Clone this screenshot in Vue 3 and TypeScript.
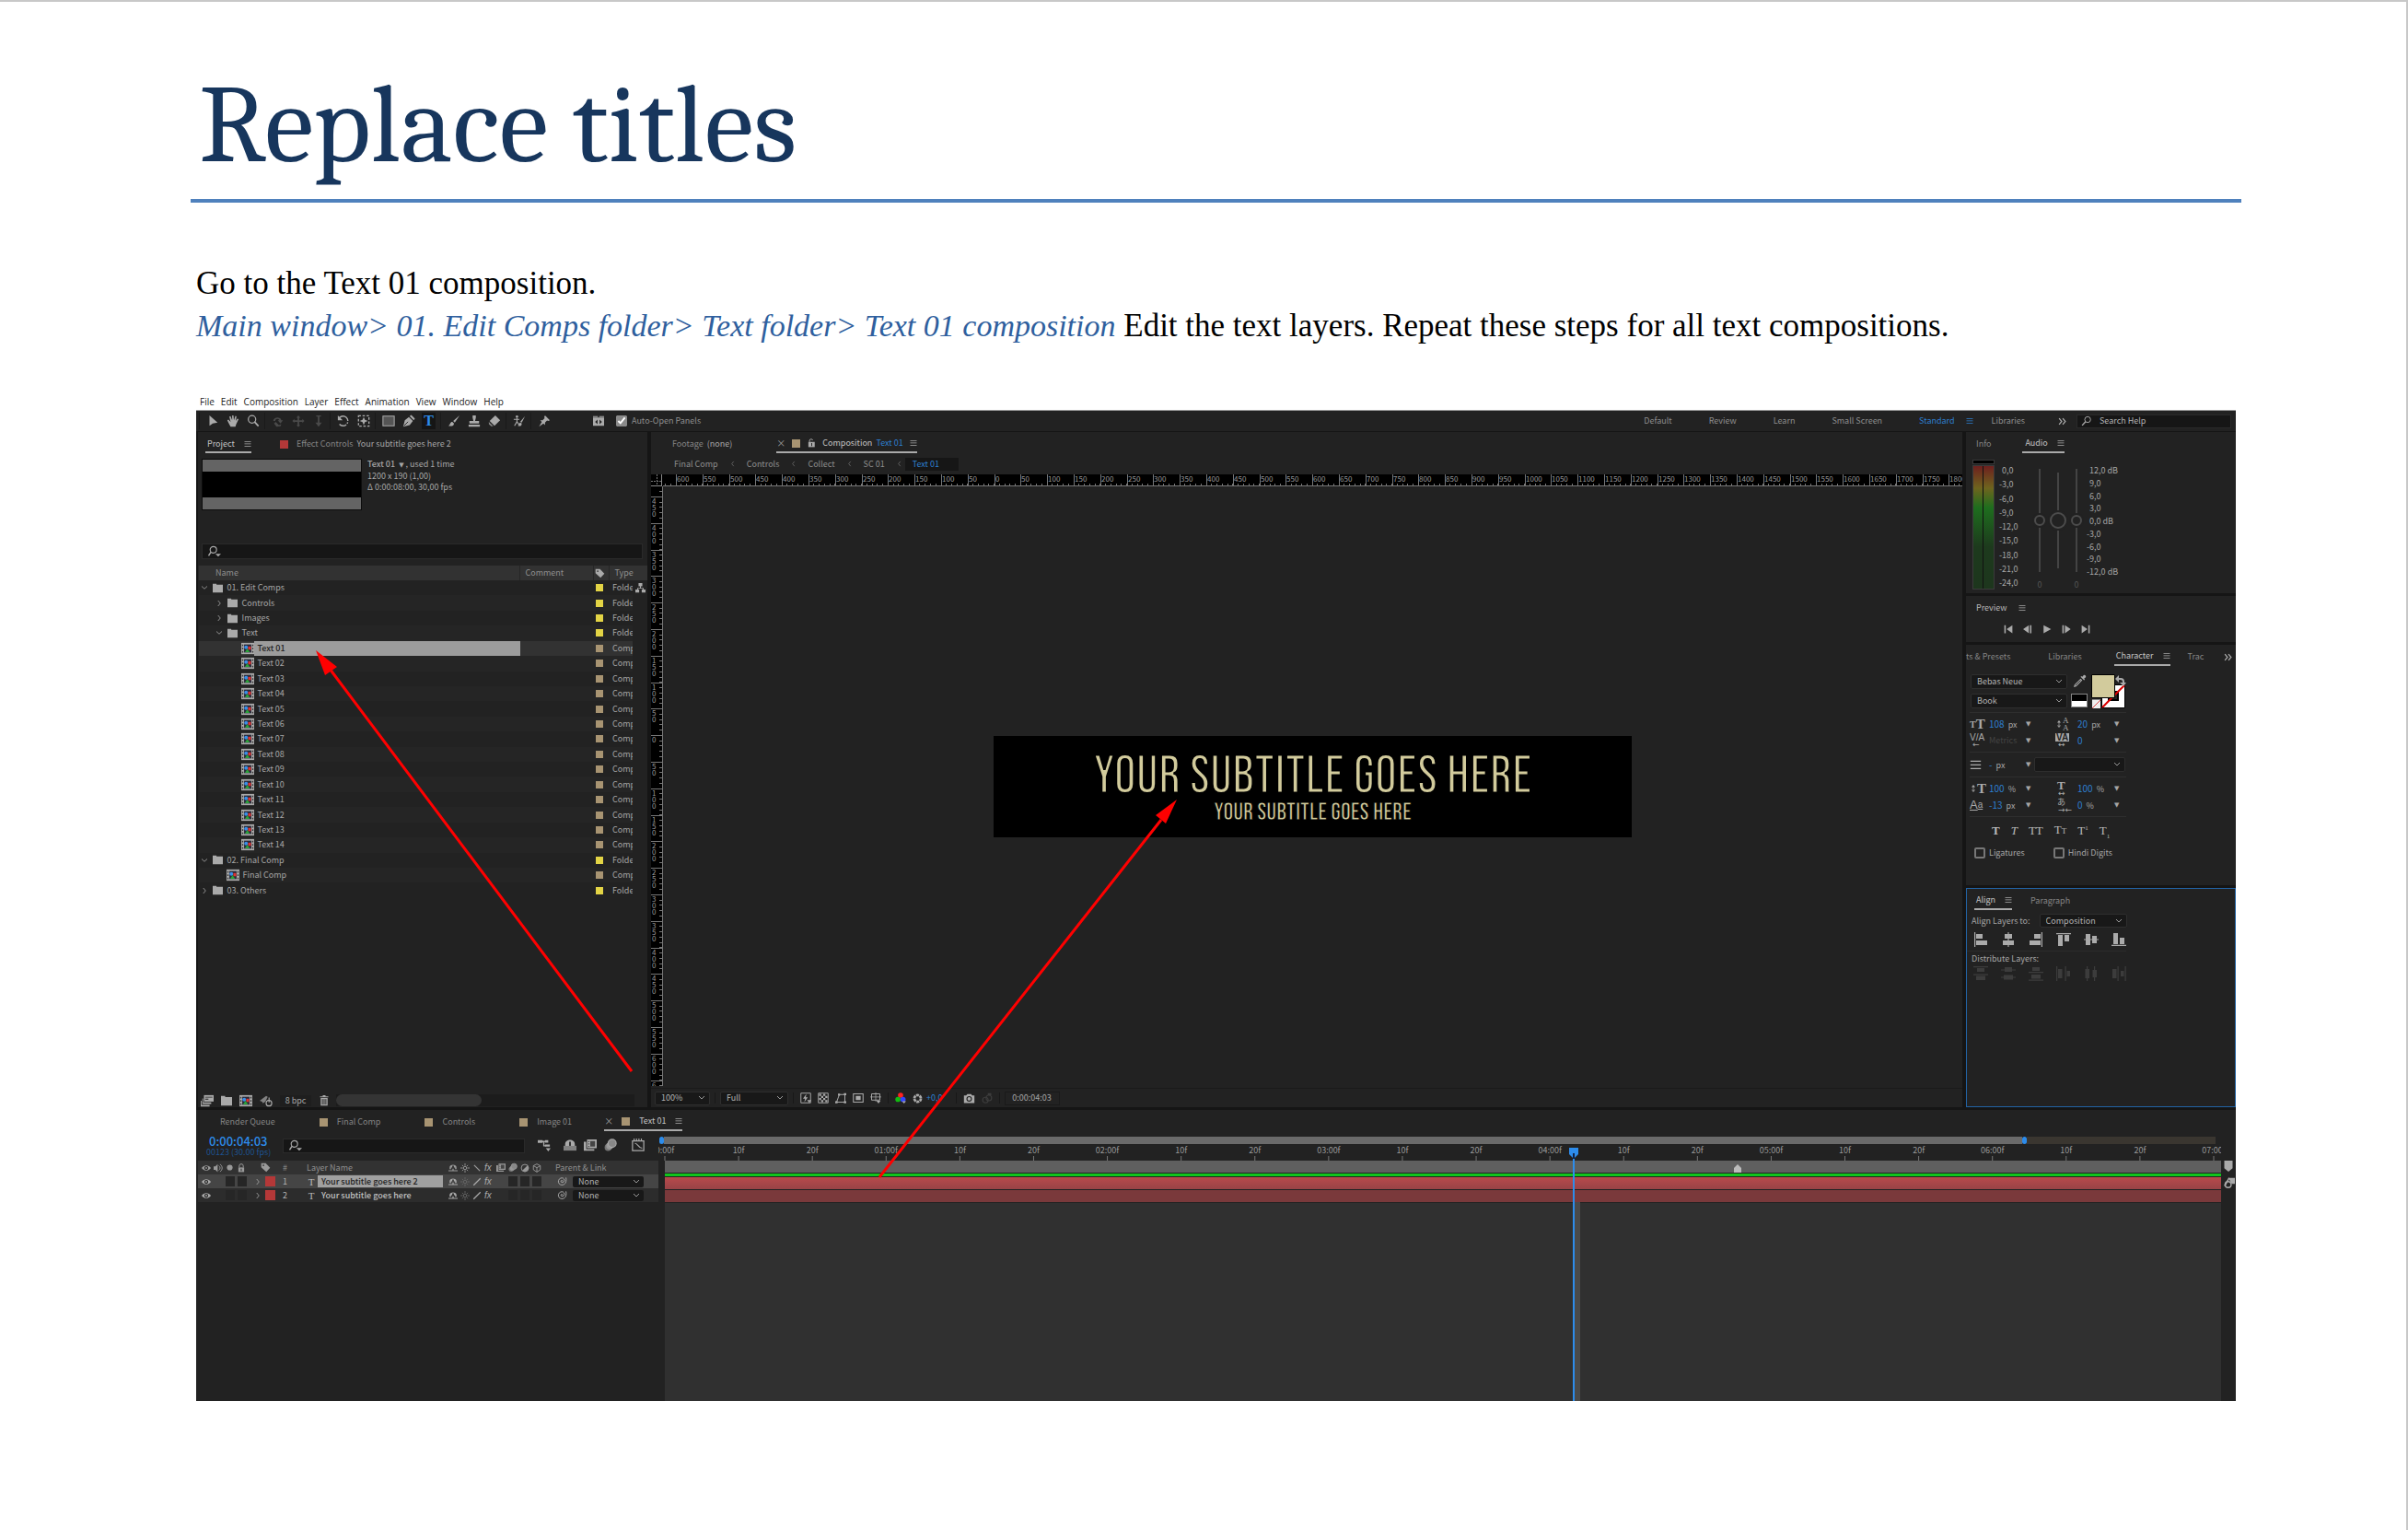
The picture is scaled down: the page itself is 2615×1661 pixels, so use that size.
<script setup lang="ts">
import { h, ref, type FunctionalComponent } from 'vue'

const glyphs: Record<string, string> = {
  arrow: '<path d="M4 1v13l4-3 6-1z"/>',
  hand: '<path d="M5 15 2 9.500 1 7l1.300-.6L5 9 3.500 2.500 5 2l2 5L7 1h1.600l.6 6L11 1.800l1.400.4L11.500 8l2-3 1.500.6-3 6.400-1 3z"/>',
  zoom: '<circle cx="6.500" cy="6" r="4.600" fill="none" stroke="currentColor" stroke-width="1.400"/><path d="m9.500 9 5 5.500" stroke="currentColor" stroke-width="2"/>',
  orbit: '<path d="M2 8c0-5 9-6 10-1l2 0-3 4-3.500-4h2C8 4 4 6 4.500 8zM5 9l4 4 3-1-1 2.500-5 .5-3-4z"/>',
  pan: '<path d="m8 1 2.500 3H9v3h4V5.500L15.500 8 13 10.500V9H9v4h1.500L8 15.500 5.500 13H7V9H3v1.500L.5 8 3 5.500V7h4V4H5.500z"/>',
  dolly: '<path d="M7 1h2v9h3l-4 5-4-5h3zM5 1h6v1.500H5z"/>',
  rotate: '<path d="M3 4a6 6 0 1 1 0 8" fill="none" stroke="currentColor" stroke-width="1.600" stroke-dasharray="14 1.500 2 1.500"/><path d="M1 1v6h6z"/>',
  anchor: '<path d="M1.500 1.500h13v13h-13z" fill="none" stroke="currentColor" stroke-width="1.500" stroke-dasharray="3 2"/><path d="m8 3 1.500 3.500L13 8 9.500 9.500 8 13 6.500 9.500 3 8l3.500-1.500z"/>',
  rect: '<path d="M1 2h14v12H1z" fill="#555" stroke="currentColor" stroke-width="1.200"/>',
  pen: '<path d="m1 15 2-8 5-4 5 5-4 5zM9 2l2-1.500L15.500 5 14 7z"/><path d="m2 14 5-5" stroke="#222"/>',
  brush: '<path d="M15 1 7 8l2 2zM6 9c-3 0-2 3-5 5 4 1 7 0 7-3z"/>',
  stamp: '<path d="M6 1h4v3L9 8h5v3H2V8h5L6 4zM1 12.500h14V15H1z"/>',
  eraser: '<path d="m9 1 6 6-7 7-6-6z"/><path d="m1 9 5.500 5.500H4L1 12z" fill="#888"/>',
  roto: '<circle cx="5" cy="2.500" r="1.500"/><path d="M1 6h7M5 4v5l-3 5M5 9l3 4" fill="none" stroke="currentColor" stroke-width="1.300"/><path d="m15 2-6 7 2 1zM9 10c-2 1-1 3-3 4 3 1 5 0 5-3z"/>',
  pin: '<path d="m9 1 6 6-2 1-1.500-.5L9 10v3L3 7h3l2.500-2.500L8 3zM5 9l2 2-5.500 4z"/>',
  gear: '<path d="M0 3h16v12H0zM0 1h7v1.200H0zM9 1h7v1.200H9z"/><path d="M6.500 6v6.500L3 9.200zM9.500 6v6.500l3.500-3.300z" fill="#222"/>',
  search: '<circle cx="9.500" cy="6" r="4.200" fill="none" stroke="currentColor" stroke-width="1.300"/><path d="m6.500 9-5 5.500" stroke="currentColor" stroke-width="1.800"/>',
  searchd: '<circle cx="6.500" cy="5.500" r="4" fill="none" stroke="currentColor" stroke-width="1.300"/><path d="m3.500 8.500-3 4.500" stroke="currentColor" stroke-width="1.700"/><path d="M9 10.500h7l-3.500 3.500z"/>',
  menu: '<path d="M1 2h14v1.600H1zM1 7h14v1.600H1zM1 12h14v1.600H1z"/>',
  chevr: '<path d="m5.500 2 5 6-5 6" fill="none" stroke="currentColor" stroke-width="1.600"/>',
  chevl: '<path d="m11 2-5 6 5 6" fill="none" stroke="currentColor" stroke-width="1.600"/>',
  chevd: '<path d="m2 5 6 5.500L14 5" fill="none" stroke="currentColor" stroke-width="1.600"/>',
  more: '<path d="m2 2 5 6-5 6M9 2l5 6-5 6" fill="none" stroke="currentColor" stroke-width="2.200"/>',
  folder: '<path d="M0 1h6v1.500h10V15H0z"/>',
  comp: '<path d="M0 1h16v14H0z" fill="#aaa"/><path d="M1 3h1.500v2H1zm0 4h1.500v2H1zm0 4h1.500v2H1zM13.500 3H15v2h-1.500zm0 4H15v2h-1.500zm0 4H15v2h-1.500z" fill="#333"/><path d="M3.500 3h9v10h-9z" fill="#2a2a3a"/><circle cx="6" cy="6.500" r="2.300" fill="#3a8ee8"/><path d="M8.500 5.500h3.500v4H8.500z" fill="#d33"/><path d="m7.500 8 3 4.500h-6z" fill="#2aa33a"/>',
  tag: '<path d="M1 1h7l7 7.500L9 15 1 7.500z"/><circle cx="4.500" cy="4.500" r="1.300" fill="#333"/>',
  flow: '<path d="M5 0h6v5H5zM0 10h6v5H0zM10 10h6v5h-6zM7.300 5h1.400v2.500H13V10h-1.400V8.800H4.400V10H3V7.500h4.300z"/>',
  interpret: '<path d="M4 1h12v8H4z"/><path d="M5.500 3h9v1h-9zm0 2.500h4v1h-4z" fill="#222"/><path d="M2 5h1v5h10v2H2zM0 8h1v5h10v2H0z"/>',
  plane: '<path d="m0 8 8-6 2 1-3 6-3 2-1-2z" opacity=".7"/><circle cx="11.500" cy="11" r="3.500" fill="none" stroke="currentColor" stroke-width="1.300"/><path d="M11 4h1.300v6H11z"/>',
  trash: '<path d="M6 0h4v1.500h4V3H2V1.500h4zM3 4h10v11H3z"/><path d="M5.500 5.500v8M8 5.500v8M10.500 5.500v8" stroke="#222" stroke-width="1.200"/>',
  lock: '<path d="M3 7h10v8H3z"/><path d="M4.500 7V4.500a3.500 3.500 0 0 1 7 0V7" fill="none" stroke="currentColor" stroke-width="1.600"/><path d="M7.300 9h1.400v4H7.300z" fill="#222"/>',
  unlock: '<path d="M3 6h11v9H3z"/><path d="M5 6V3.500c0-3 5-3 5.500-.5" fill="none" stroke="currentColor" stroke-width="1.600"/><path d="M8 8h1.500v5H8z" fill="#222"/>',
  fast: '<path d="M1 1h14v14H1z" fill="none" stroke="currentColor" stroke-width="1.300"/><path d="M9 2 4 9h3l-1 5 5-7H8z"/><path d="M10 11h6l-3 4z"/>',
  grid: '<path d="M1 1h14v14H1z" fill="none" stroke="currentColor" stroke-width="1.300"/><path d="M2 2h3v3H2zm6 0h3v3H8zM5 5h3v3H5zm6 0h3v3h-3zM2 8h3v3H2zm6 0h3v3H8zm-3 3h3v3H5zm6 0h3v3h-3z"/>',
  mask: '<path d="M2 14 6 3h8v11z" fill="none" stroke="currentColor" stroke-width="1.300"/><path d="M0 12.500h3.500v3H0zM12.500 12.500H16v3h-3.500zM12.500 1H16v3h-3.500zM4 1.500h3v3H4z"/>',
  roi: '<path d="M1 2h14v12H1z" fill="none" stroke="currentColor" stroke-width="1.400"/><path d="M4.500 5h7v6h-7z"/>',
  guides: '<path d="M2 2h12v9H2z" fill="none" stroke="currentColor" stroke-width="1.300"/><path d="M8 0v13M0 6.500h16" stroke="currentColor"/><path d="M9 12h6l-3 4z"/>',
  rgb: '<circle cx="8" cy="4" r="3.800" fill="#f22"/><circle cx="4.200" cy="10" r="3.800" fill="#1b1"/><circle cx="11.500" cy="10" r="3.800" fill="#34f"/><path d="M10 12.500h6L13 16z"/>',
  shutter: '<circle cx="8" cy="8" r="5.200" fill="none" stroke="currentColor" stroke-width="4" stroke-dasharray="4.400 1"/>',
  camera: '<path d="M1 4h3l1.500-2h5L12 4h3v10H1z"/><circle cx="8" cy="8.500" r="3" fill="none" stroke="#222" stroke-width="1.400"/>',
  snap: '<circle cx="5.500" cy="11" r="4" fill="none" stroke="currentColor" stroke-width="1.600"/><circle cx="10.500" cy="8" r="4" fill="none" stroke="currentColor" stroke-width="1.600"/><path d="M9 1h5v3H9z"/>',
  first: '<path d="M1 1h2.500v14H1zM15 1v14L5 8z"/>',
  prev: '<path d="M10 1v14L0 8zM12 1h2.500v14H12z"/>',
  play: '<path d="M2 1v14l13-7z"/>',
  next: '<path d="M1 1h2.500v14H1zM5.500 1v14l10-7z"/>',
  last: '<path d="M1 1v14l10-7zM12.500 1H15v14h-2.500z"/>',
  drop: '<path d="m1 15 1-3 7-7 2 2-7 7zM9 3l1-1 1 1 1.500-2c1-1 3.500 1 2.500 2.500L13 5l1 1-1 1z"/><path d="m3 13 6-6" stroke="#222"/>',
  updown: '<path d="M7.300 3h1.400v10H7.300zM8 0l4 5H4zM8 16l4-5H4z"/>',
  eye: '<path d="M0 8c4-6 12-6 16 0-4 6-12 6-16 0z"/><circle cx="8" cy="8" r="3.400" fill="#222"/><circle cx="8" cy="8" r="1.500"/>',
  speaker: '<path d="M0 5h3l4-4v14l-4-4H0z"/><path d="M9 4c3 2 3 6 0 8M11 1.500c5 3 5 10 0 13" fill="none" stroke="currentColor" stroke-width="1.500"/>',
  dot: '<circle cx="8" cy="8" r="5.500"/>',
  shy: '<path d="M2 10V7c0-6 12-6 12 0v3h-2.500V7H9.500V4h-3v3h-2v3zM0 12h7V9h2v3h7v1.500H0z"/>',
  sun: '<circle cx="8" cy="8" r="2.800" fill="none" stroke="currentColor" stroke-width="1.500"/><path d="M8 0v4M8 12v4M0 8h4M12 8h4M3 3l2 2M11 11l2 2M3 13l2-2M11 5l2-2" stroke="currentColor" stroke-width="1.400"/>',
  back: '<path d="m3 3 10 10" stroke="currentColor" stroke-width="2"/>',
  slash: '<path d="M2 14 14 2" stroke="currentColor" stroke-width="2"/>',
  film: '<path d="M4 1h12v11H4zM0 4h3v9h10v2H0z"/><path d="M5.500 3h1.500v1.500H5.500zm0 3h1.500v1.500H5.500zm0 3h1.500v1.500H5.500zM8 3h6v7H8z" fill="#444"/>',
  blur: '<circle cx="5" cy="11" r="4.300" fill="#777"/><circle cx="7" cy="9" r="4.300" fill="#999"/><circle cx="10" cy="6" r="5" fill="#888" stroke="currentColor" stroke-width="1.300"/>',
  adjust: '<circle cx="8" cy="8" r="6.300" fill="none" stroke="currentColor" stroke-width="1.500"/><path d="M12.500 3.500A6.300 6.300 0 0 1 3.500 12.500z"/>',
  cube: '<path d="m8 1 6 3v7l-6 4-6-4V4zM2 4l6 3.500L14 4M8 7.500V15" fill="none" stroke="currentColor" stroke-width="1.500"/>',
  mini: '<path d="M0 2h6v3.500H0zM9 2h4v3H9zM9 7.500h6v2.500H9z"/><path d="M5 3.700h4M7.500 4v5H10" fill="none" stroke="currentColor" stroke-width="1.500"/><path d="M10 12h6l-3 4z"/>',
  shybig: '<path d="M0 9h16v6H0z" opacity=".7"/><path d="M2 9V7c0-7 12-7 12 0v2H9V4H7v5z"/>',
  graph: '<path d="M1 3h14v12H1z" fill="none" stroke="currentColor" stroke-width="1.400"/><path d="M4 6c4 0 4 6 9 6M3 0v3M6 0v3M9 0v3M12 0v3" fill="none" stroke="currentColor" stroke-width="1.300"/>',
  spiral: '<path d="M9 8a1.500 1.500 0 1 0-2 1.500c2 .8 4.500-.5 4.500-3C11.500 3 8 1.800 5.500 3 2 4.500 1 8.500 3 11.500c2 2.500 6 3 8.500 1C14 10.500 15 7 14 2" fill="none" stroke="currentColor" stroke-width="1.400"/>',
  marker: '<path d="M2 0h12v11l-6 5-6-5z"/>',
  track: '<path d="M7 2h9v8h-4zM1 13 8 1v4l-4 7z"/><circle cx="7" cy="11" r="4" fill="none" stroke="currentColor" stroke-width="1.800"/>',
  a1: '<path d="M1 0h1.200v16H1zM3 2h7v5H3zM3 9h12v5H3z"/>',
  a2: '<path d="M7.400 0h1.200v16H7.400zM4 2h8v5H4zM2 9h12v5H2z"/>',
  a3: '<path d="M13.800 0H15v16h-1.200zM6 2h7v5H6zM1 9h12v5H1z"/>',
  a4: '<path d="M0 1h16v1.200H0zM2 3h5v12H2zM9 3h5v7H9z"/>',
  a5: '<path d="M0 7.400h16v1.200H0zM2 2h5v12H2zM9 4h5v8H9z"/>',
  a6: '<path d="M0 13.800h16V15H0zM2 1h5v12H2zM9 6h5v7H9z"/>',
  d1: '<path d="M0 0h16v1.200H0zM4 2h8v4H4zM0 8.500h16v1.200H0zM3 10.500h10V15H3z"/>',
  d2: '<path d="M0 3.400h16v1.200H0zM4 1h8v5H4zM0 11.400h16v1.200H0zM3 9.500h10v5H3z"/>',
  d3: '<path d="M4 1h8v4H4zM0 6h16v1.200H0zM3 9h10v4.500H3zM0 14.500h16v1.200H0z"/>',
  d4: '<path d="M0 0h1.200v16H0zM2 3h4.500v10H2zM9.500 0h1.200v16H9.500zM11.500 5H15v6h-3.500z"/>',
  d5: '<path d="M3 0h1.200v16H3zM1.500 3H6v10H1.500zM11 0h1.200v16H11zM9.500 4H14v8H9.500z"/>',
  d6: '<path d="M1 3h4.500v10H1zM6.500 0h1.200v16H6.500zM10 5h3.500v6H10zM14.500 0h1.200v16h-1.200z"/>',
}

const Icon: FunctionalComponent<{ n: string; s?: number }> = (p) =>
  h('svg', { class: 'icon', viewBox: '0 0 16 16', width: p.s ?? 12, height: p.s ?? 12, fill: 'currentColor', 'aria-hidden': 'true', innerHTML: glyphs[p.n] })
Icon.props = ['n', 's']

const menus = ['File', 'Edit', 'Composition', 'Layer', 'Effect', 'Animation', 'View', 'Window', 'Help']
const toolGroups = [
  ['arrow', 'hand', 'zoom'],
  ['orbit', 'pan', 'dolly'],
  ['rotate', 'anchor'],
  ['rect', 'pen', 'type'],
  ['brush', 'stamp', 'eraser'],
  ['roto'],
  ['pin'],
]

interface Item { name: string; level: number; kind: 'folder' | 'comp'; open?: boolean }
const items: Item[] = [
  { name: '01. Edit Comps', level: 0, kind: 'folder', open: true },
  { name: 'Controls', level: 1, kind: 'folder' },
  { name: 'Images', level: 1, kind: 'folder' },
  { name: 'Text', level: 1, kind: 'folder', open: true },
  ...Array.from({ length: 14 }, (_, i): Item => ({ name: 'Text ' + String(i + 1).padStart(2, '0'), level: 2, kind: 'comp' })),
  { name: '02. Final Comp', level: 0, kind: 'folder', open: true },
  { name: 'Final Comp', level: 1, kind: 'comp' },
  { name: '03. Others', level: 0, kind: 'folder' },
]
const selected = ref('Text 01')

/* Rulers: 100 composition units span 57.6 px, zero sits on the composition's corner */
const unit = 0.576
const hMajor = Array.from({ length: 49 }, (_, i) => ({ x: Math.round(14 + i * 50 * unit), t: Math.abs(i * 50 - 600) }))
const hMinor = Array.from({ length: 245 }, (_, i) => Math.round(2 + i * 10 * unit))
const vMajor = Array.from({ length: 23 }, (_, i) => ({ y: Math.round(11 + i * 50 * unit), t: String(Math.abs(i * 50 - 450)) }))
const vMinor = Array.from({ length: 113 }, (_, i) => Math.round(5 + i * 10 * unit))

const meter = ['0,0', '-3,0', '-6,0', '-9,0', '-12,0', '-15,0', '-18,0', '-21,0', '-24,0']
const gain = ['12,0 dB', '9,0', '6,0', '3,0', '0,0 dB', '-3,0', '-6,0', '-9,0', '-12,0 dB']

const seconds = Array.from({ length: 22 }, (_, i) => ({
  pos: (i / 21) * 100,
  t: i === 0 ? '0:00f' : i % 3 === 0 ? `0${i / 3}:00f` : `${(i % 3) * 10}f`,
}))

const layers = [
  { n: 1, name: 'Your subtitle goes here 2' },
  { n: 2, name: 'Your subtitle goes here' },
]
</script>

<template>
  <main class="page">
    <h1>Replace titles</h1>
    <p class="intro">
      Go to the Text 01 composition.<br />
      <em>Main window&gt; 01. Edit Comps folder&gt; Text folder&gt; Text 01 composition</em> Edit the text layers. Repeat these steps for all text compositions.
    </p>

    <section class="shot">
      <nav class="menubar"><button v-for="m in menus" :key="m">{{ m }}</button></nav>

      <div class="window">
        <div class="toolbar">
          <div v-for="(g, i) in toolGroups" :key="i" class="tools" :class="{ dim: i === 1 }">
            <button v-for="t in g" :key="t" class="tool" :class="{ on: t === 'type' }" :aria-label="t">
              <span v-if="t === 'type'" class="tglyph">T</span><Icon v-else :n="t" :s="14" />
            </button>
          </div>
          <button class="gearbtn" aria-label="Panels"><Icon n="gear" /></button>
          <label class="auto"><input type="checkbox" checked />Auto-Open Panels</label>
          <nav class="spaces">
            <button>Default</button><button>Review</button><button>Learn</button><button>Small Screen</button>
            <button class="std">Standard <Icon n="menu" :s="8" /></button><button>Libraries</button>
          </nav>
          <button class="morebtn" aria-label="More"><Icon n="more" :s="9" /></button>
          <label class="help"><Icon n="search" /><input type="text" placeholder="Search Help" aria-label="Search Help" /></label>
        </div>

        <div class="work">
          <section class="panel project">
            <div class="tabs">
              <button class="tab active">Project<Icon n="menu" :s="8" class="tm" /></button>
              <button class="tab fx"><i class="sw red"></i><span class="muted">Effect Controls</span>&nbsp; Your subtitle goes here 2</button>
            </div>
            <div class="info">
              <div class="thumb"></div>
              <div><b>Text 01</b> &nbsp;<span class="tri">▼</span> , used 1 time<br />1200 x 190 (1,00)<br />Δ 0:00:08:00, 30,00 fps</div>
            </div>
            <label class="find"><Icon n="searchd" :s="14" /><input type="text" aria-label="Search project" /></label>
            <table class="files">
              <colgroup><col /><col class="c-com" /><col class="c-tag" /><col class="c-type" /><col class="c-flow" /></colgroup>
              <thead><tr><th class="h-name">Name</th><th>Comment</th><th><Icon n="tag" :s="11" /></th><th colspan="2">Type</th></tr></thead>
              <tbody>
                <tr v-for="it in items" :key="it.name" :class="{ sel: it.name === selected }" @click="selected = it.name">
                  <td>
                    <div class="fname" :class="'l' + it.level">
                      <span class="ch"><Icon v-if="it.kind === 'folder'" :n="it.open ? 'chevd' : 'chevr'" :s="8" /></span>
                      <Icon :n="it.kind" :s="14" :class="it.kind" /><span class="nm">{{ it.name }}</span>
                    </div>
                  </td>
                  <td></td>
                  <td><i class="sw" :class="it.kind === 'folder' ? 'yellow' : 'tan'"></i></td>
                  <td><div class="clip">{{ it.kind === 'folder' ? 'Folder' : 'Comp' }}</div></td>
                  <td class="fl"><Icon v-if="it.name === '01. Edit Comps'" n="flow" :s="11" /></td>
                </tr>
              </tbody>
            </table>
            <div class="pfoot">
              <button aria-label="Interpret"><Icon n="interpret" :s="14" /></button>
              <button aria-label="New folder"><Icon n="folder" /></button>
              <button aria-label="New composition"><Icon n="comp" :s="14" /></button>
              <button class="plane" aria-label="Settings"><Icon n="plane" :s="14" /></button>
              <button class="bpc">8 bpc</button>
              <button class="bin" aria-label="Delete"><Icon n="trash" /></button>
              <div class="scroll"><i></i></div>
            </div>
          </section>

          <section class="panel viewer">
            <div class="tabs">
              <button class="tab foot"><span class="muted">Footage</span>&nbsp; (none)</button>
              <button class="tab active comptab"><span class="x">×</span><i class="sw tan"></i><Icon n="unlock" :s="10" /><span>Composition &nbsp;<span class="blue">Text 01</span></span><Icon n="menu" :s="8" /></button>
            </div>
            <nav class="crumbs">
              <a href="#">Final Comp</a><Icon n="chevl" :s="7" /><a href="#">Controls</a><Icon n="chevl" :s="7" /><a href="#">Collect</a><Icon n="chevl" :s="7" /><a href="#">SC 01</a><Icon n="chevl" :s="7" class="lastch" /><a href="#" class="cur">Text 01</a>
            </nav>
            <div class="canvas">
              <svg class="corner"><path d="M0 7.500H12M6.500 0V12" stroke="#777" stroke-dasharray="2 1" /><path d="M11.500 0V13M0 12.500H12" stroke="#888" /></svg>
              <svg class="hruler">
                <line v-for="x in hMinor" :key="x" :x1="x" :x2="x" y1="10" y2="12" class="tk" />
                <g v-for="m in hMajor" :key="m.x"><line :x1="m.x" :x2="m.x" y1="0" y2="12" class="tk" /><text :x="m.x + 1" y="8">{{ m.t }}</text></g>
              </svg>
              <svg class="vruler">
                <line v-for="y in vMinor" :key="y" :y1="y" :y2="y" x1="9" x2="12" class="tk" />
                <g v-for="m in vMajor" :key="m.y"><line :y1="m.y" :y2="m.y" x1="0" x2="12" class="tk" /><text v-for="(d, j) in m.t" :key="j" x="1" :y="m.y + 8 + j * 7">{{ d }}</text></g>
              </svg>
              <div class="stage">
                <div class="frame"><div class="big">YOUR SUBTITLE GOES HERE</div><div class="small">YOUR SUBTITLE GOES HERE</div></div>
              </div>
            </div>
            <div class="vfoot">
              <select class="w60" aria-label="Zoom"><option>100%</option></select><i class="bar"></i>
              <select class="w74" aria-label="Resolution"><option>Full</option></select><i class="bar"></i>
              <div class="vicons"><button v-for="n in ['fast', 'grid', 'mask', 'roi', 'guides']" :key="n" :aria-label="n"><Icon :n="n" /></button></div><i class="bar"></i>
              <div class="vicons"><button aria-label="Channels"><Icon n="rgb" /></button><button aria-label="Exposure"><Icon n="shutter" :s="11" /></button></div>
              <span class="exp">+0,0</span><i class="bar"></i>
              <div class="vicons"><button aria-label="Snapshot"><Icon n="camera" :s="13" /></button><button class="off" aria-label="Show snapshot"><Icon n="snap" /></button></div><i class="bar"></i>
              <button class="tc">0:00:04:03</button>
            </div>
          </section>

          <aside class="side">
            <section class="panel audio">
              <div class="tabs"><button class="tab muted">Info</button><button class="tab active">Audio<Icon n="menu" :s="8" class="tm" /></button></div>
              <div class="mix">
                <div class="vu"><i class="peak"></i><i class="lvl"></i></div>
                <ol class="scale db"><li v-for="v in meter" :key="v">{{ v }}</li></ol>
                <div class="faders">
                  <label><input type="range" aria-label="Left" /><span>0</span></label>
                  <label class="mid"><input type="range" aria-label="Both" /></label>
                  <label><input type="range" aria-label="Right" /><span>0</span></label>
                </div>
                <ol class="scale gain"><li v-for="v in gain" :key="v" :class="{ neg: v[0] === '-' }">{{ v }}</li></ol>
              </div>
            </section>
            <section class="panel preview">
              <h2>Preview <Icon n="menu" :s="8" /></h2>
              <div class="transport"><button v-for="n in ['first', 'prev', 'play', 'next', 'last']" :key="n" :aria-label="n"><Icon :n="n" :s="10" /></button></div>
            </section>
            <section class="panel char">
              <div class="tabs ctabs">
                <button class="tab muted">ts &amp; Presets</button><button class="tab muted">Libraries</button>
                <button class="tab active">Character<Icon n="menu" :s="8" class="tm" /></button><button class="tab muted">Trac</button>
                <button class="morebtn" aria-label="More"><Icon n="more" :s="9" /></button>
              </div>
              <div class="fonts">
                <div class="fsel"><select aria-label="Font"><option>Bebas Neue</option></select><select aria-label="Style"><option>Book</option></select></div>
                <div class="pick"><Icon n="drop" :s="15" /><i class="bw"></i></div>
                <svg class="colors" width="38" height="38">
                  <path d="M11.500 11.500h25v25h-25z" fill="#fff" stroke="#000" /><path d="M19 19h10v9H19z" fill="#222" stroke="#000" stroke-width="2" />
                  <path d="m12 36 24-24" stroke="#d00" stroke-width="2" /><path d="M.5.5h25v25H.5z" fill="#d2cb9c" stroke="#000" />
                  <path d="M1 27.500h9V37H1z" fill="#eee" /><path d="m1 37 9-9" stroke="#d44" />
                  <path d="M29 5h3q3 0 3 3v3" fill="none" stroke="#aaa" stroke-width="2" /><path d="M30 1v8l-4-4zM31 9h7l-3 4z" fill="#aaa" />
                </svg>
              </div>
              <div class="grp">
                <div class="cell"><span class="gl"><small>T</small>T</span><span class="v"><b>108</b> px</span><i class="tri">▼</i></div>
                <div class="cell"><span class="gl stack"><Icon n="updown" :s="8" /><span>A<br />A</span></span><span class="v"><b>20</b> px</span><i class="tri">▼</i></div>
                <div class="cell"><span class="gl sans">V/A<u>←</u></span><span class="v dimv">Metrics</span><i class="tri">▼</i></div>
                <div class="cell"><span class="gl sans"><mark>VA</mark><u>↔</u></span><span class="v"><b>0</b></span><i class="tri">▼</i></div>
              </div>
              <div class="grp one">
                <div class="cell"><span class="gl"><Icon n="menu" :s="13" /></span><span class="v"><b>-</b> px</span><i class="tri">▼</i></div>
                <select aria-label="Stroke style"><option></option></select>
              </div>
              <div class="grp">
                <div class="cell"><span class="gl mid"><Icon n="updown" :s="8" />T</span><span class="v"><b>100</b> %</span><i class="tri">▼</i></div>
                <div class="cell"><span class="gl sans"><span class="tw">T</span><u>↔</u></span><span class="v"><b>100</b> %</span><i class="tri">▼</i></div>
                <div class="cell"><span class="gl sans ul">A<small>a</small></span><span class="v"><b>-13</b> px</span><i class="tri">▼</i></div>
                <div class="cell"><span class="gl sans"><span class="jp">あ</span><u>→←</u></span><span class="v"><b>0</b> %</span><i class="tri">▼</i></div>
              </div>
              <div class="faux">
                <button><b>T</b></button><button><em>T</em></button><button>TT</button><button>T<small>T</small></button><button>T<sup>1</sup></button><button>T<sub>1</sub></button>
              </div>
              <div class="opts"><label><input type="checkbox" />Ligatures</label><label><input type="checkbox" />Hindi Digits</label></div>
            </section>
            <section class="panel align">
              <div class="tabs"><button class="tab active">Align<Icon n="menu" :s="8" class="tm" /></button><button class="tab muted">Paragraph</button></div>
              <label class="alto">Align Layers to: <select><option>Composition</option></select></label>
              <div class="aicons"><button v-for="i in 6" :key="i" :aria-label="'Align ' + i"><Icon :n="'a' + i" :s="16" /></button></div>
              <div class="dl">Distribute Layers:</div>
              <div class="aicons off"><button v-for="i in 6" :key="i" :aria-label="'Distribute ' + i"><Icon :n="'d' + i" :s="16" /></button></div>
            </section>
          </aside>
        </div>

        <section class="panel timeline">
          <div class="tabs ttabs">
            <button class="tab muted rq">Render Queue</button>
            <button class="tab muted"><i class="sw tan"></i>Final Comp</button>
            <button class="tab muted"><i class="sw tan"></i>Controls</button>
            <button class="tab muted"><i class="sw tan"></i>Image 01</button>
            <button class="tab active"><span class="x">×</span><i class="sw tan"></i>Text 01<Icon n="menu" :s="8" class="tm" /></button>
          </div>
          <div class="tl">
            <div class="tleft">
              <div class="thead">
                <div class="time"><b>0:00:04:03</b><span>00123 (30.00 fps)</span></div>
                <label class="find"><Icon n="searchd" :s="14" /><input type="text" aria-label="Search layers" /></label>
                <div class="ticons"><Icon n="mini" :s="14" /><Icon n="shybig" :s="14" /><Icon n="film" :s="14" /><Icon n="blur" :s="14" /><Icon n="graph" :s="14" /></div>
              </div>
              <table class="layers">
                <colgroup><col class="k1" /><col class="k2" /><col class="k3" /><col class="k4" /><col class="k5" /><col /></colgroup>
                <thead>
                  <tr>
                    <th><div class="av"><Icon n="eye" :s="10" /><Icon n="speaker" :s="10" /><Icon n="dot" :s="9" /><Icon n="lock" :s="10" /></div></th>
                    <th><div class="tg"><Icon n="tag" :s="11" /></div></th><th>#</th><th>Layer Name</th>
                    <th><div class="sws"><Icon n="shy" :s="10" /><Icon n="sun" :s="10" /><Icon n="back" :s="10" /><i class="fxi">fx</i><Icon n="film" :s="11" /><Icon n="blur" :s="11" /><Icon n="adjust" :s="10" /><Icon n="cube" :s="10" /></div></th>
                    <th>Parent &amp; Link</th>
                  </tr>
                </thead>
                <tbody>
                  <tr v-for="l in layers" :key="l.n" :class="{ lsel: l.n === 1 }">
                    <td><div class="av"><Icon n="eye" :s="10" /><s></s><s class="bx"></s><s class="bx"></s></div></td>
                    <td><div class="tg"><Icon n="chevr" :s="8" /><i class="sw red"></i></div></td>
                    <td class="num">{{ l.n }}</td>
                    <td><div class="ln"><span class="ty">T</span><span class="lname">{{ l.name }}</span></div></td>
                    <td><div class="sws"><Icon n="shy" :s="10" /><Icon n="sun" :s="10" class="faint" /><Icon n="slash" :s="10" /><i class="fxi">fx</i><s></s><s class="bx"></s><s class="bx"></s><s class="bx"></s></div></td>
                    <td><div class="par"><Icon n="spiral" :s="11" /><select aria-label="Parent"><option>None</option></select></div></td>
                  </tr>
                </tbody>
              </table>
            </div>
            <div class="tracks">
              <div class="navi"><i class="cap"></i><i class="range"></i><i class="cap"></i><i class="rest"></i></div>
              <svg class="truler">
                <g v-for="s in seconds" :key="s.pos"><line :x1="s.pos + '%'" :x2="s.pos + '%'" y1="14" y2="19" stroke="#777" /><text :x="s.pos + '%'" y="11" text-anchor="middle">{{ s.t }}</text></g>
              </svg>
              <div class="area"></div><div class="green"></div>
              <div class="clipbar c1"></div><div class="clipbar c2"></div>
              <div class="void"></div>
              <div class="playhead"><svg width="14" height="12"><path d="M2 0h10v7l-5 5-5-5z" fill="#2d8ceb" /><path d="M7 6v6" stroke="#124" stroke-width="2" /></svg></div>
              <svg class="work-mark" width="10" height="10"><path d="M1 9V4l4-4 4 4v5z" fill="#bbb" /></svg>
            </div>
            <div class="tright"><Icon n="marker" :s="12" /><Icon n="track" :s="13" /></div>
          </div>
        </section>

        <svg class="arrows" aria-hidden="true">
          <path d="M473 717 145 280M742 832l306-388" stroke="#f00" stroke-width="3" />
          <path d="m130 260 23 18-13 9zM1065 422l-23 17 11 9z" fill="#f00" />
        </svg>
      </div>
    </section>
  </main>
</template>

<style>
body { margin: 0; background: #fff; }
</style>

<style scoped>
* { box-sizing: border-box; }
.page { min-height: 100vh; padding: 0 179px 0 207px; border-top: 2px solid #c8c8c8; border-right: 2px solid #c8c8c8; background: #fff; }
h1 { margin: 0; padding: 66px 0 12px 9px; border-bottom: 4px solid #4f81bd; font: 400 120px/136px Cambria, Caladea, "Liberation Serif", serif; color: #17365d; }
.intro { margin: 65px 0 0 6px; font: 35px/46px "Liberation Serif", serif; color: #000; }
.intro em { font-size: 34px; color: #2f5f9e; }
.shot { margin: 50px 0 0 6px; font: 9px/12px "Noto Sans CJK SC", "Noto Sans", sans-serif; color: #a6a6a6; }
button { padding: 0; border: 0; background: none; font: inherit; color: inherit; white-space: nowrap; }
input[type="text"] { min-width: 0; flex: 1; padding: 0; border: 0; outline: 0; background: none; font: inherit; color: #b4b4b4; }
input::placeholder { color: #b4b4b4; }
select { appearance: none; font: inherit; color: #b4b4b4; border: 1px solid #2e2e2e; border-radius: 2px; padding: 0 6px; outline: 0; background: #181818 url('data:image/svg+xml,<svg xmlns="http://www.w3.org/2000/svg" width="8" height="6"><path d="M1 1l3 3 3-3" fill="none" stroke="%23999"/></svg>') no-repeat right 4px center; }
i { font-style: normal; }
.icon { display: block; flex: none; color: #aaa; }
.blue { color: #2d7fd0; }
.muted { color: #858585; }

.menubar { display: flex; gap: 7px; height: 18px; padding: 0 4px; align-items: center; font: 10px/14px "Open Sans", sans-serif; color: #222; }
.window { position: relative; display: flex; flex-direction: column; background: #151515; border-top: 1px solid #999; margin-right: 6px; }

.toolbar { display: flex; align-items: center; height: 22px; padding-left: 3px; margin-bottom: 1px; background: #222; }
.tools { display: flex; gap: 7px; padding: 0 5px 0 6px; border-left: 1px solid #1a1a1a; }
.tools.dim .icon { color: #4a4a4a; }
.tool { display: flex; width: 15px; height: 18px; align-items: center; justify-content: center; }
.tool.on { background: #151515; }
.tglyph { font: bold 16px/16px "Liberation Serif", serif; color: #2d8ceb; }
.gearbtn { margin-left: 41px; }
.auto { display: flex; align-items: center; gap: 5px; margin-left: 13px; color: #8e8e8e; }
.auto input { margin: 0; width: 12px; height: 12px; accent-color: #8a8a8a; }
.spaces { display: flex; gap: 40px; margin-left: auto; color: #8e8e8e; }
.spaces .std { display: flex; gap: 12px; align-items: center; color: #2d7fd0; margin-right: -20px; }
.std .icon { color: #2d7fd0; }
.morebtn { margin: 0 11px 0 36px; }
.help { display: flex; align-items: center; gap: 8px; width: 168px; height: 15px; margin-right: 5px; padding-left: 4px; background: #161616; border: 1px solid #2a2a2a; }

.work { display: grid; grid-template-columns: 488px minmax(0, 1fr) 293px; column-gap: 4px; padding-left: 2px; height: 733px; }
.panel { background: #222; min-width: 0; }
.tabs { display: flex; height: 27px; padding-top: 5px; align-items: flex-start; }
.tab { display: flex; align-items: center; height: 18px; padding: 0 0 2px; }
.tab.active { color: #c4c4c4; border-bottom: 2px solid #aaa; }
.tm { margin-left: 10px; }
.sw { display: inline-block; flex: none; width: 9px; height: 9px; }
.red { background: #b43838; }
.tan { background: #a89472; }
.yellow { background: #e3d445; }
.x { font-size: 10px; color: #999; }

.project { display: flex; flex-direction: column; }
.project .tabs { padding-left: 8px; height: 29px; }
.project .tab.active { padding: 0 0 0 2px; }
.fx { margin-left: 31px; }
.fx .sw { margin-right: 9px; }
.info { display: flex; gap: 6px; padding-left: 4px; height: 92px; }
.info b { font-weight: 500; }
.thumb { width: 174px; height: 56px; border: 1px solid #0c0c0c; background: linear-gradient(#646464 13px, #000 13px 41px, #646464 41px); }
.tri { font: normal 7px/12px "DejaVu Sans", sans-serif; }
.find { display: flex; align-items: center; height: 17px; padding-left: 6px; margin: 0 5px 0 4px; background: #161616; border: 1px solid #2a2a2a; }
table { border-collapse: collapse; table-layout: fixed; width: 100%; text-align: left; }
th, td { padding: 0; font-weight: 400; white-space: nowrap; overflow: hidden; vertical-align: middle; }
.files { margin-top: 7px; height: 361px; }
.c-com { width: 80px; } .c-tag { width: 17px; } .c-type { width: 25px; } .c-flow { width: 16px; }
.files thead tr { height: 16px; background: #323232; }
.files th { border-left: 1px solid #262626; padding-left: 5px; color: #909090; }
.files th.h-name { padding-left: 18px; }
.files th:nth-child(3) { padding-left: 1px; }
.files tbody tr:nth-child(even) { background: #252525; }
.files td:nth-child(3) { padding-left: 2px; }
.files td:nth-child(3) .sw { display: block; width: 8px; height: 8px; }
.fname { display: flex; align-items: center; padding-left: 2px; }
.fname.l1 { padding-left: 18px; }
.fname.l2 { padding-left: 34px; }
.ch { width: 12px; flex: none; }
.folder { width: 13px; height: 11px; }
.nm { flex: 1; padding-left: 4px; line-height: 16px; }
.clip { width: 22px; margin-left: 3px; overflow: hidden; }
.files td.fl { background: #222; padding-left: 3px; }
.files tbody tr.sel { background: #323232; }
.sel .nm { background: #9c9c9c; color: #222; font-weight: 500; }
.pfoot { display: flex; align-items: center; height: 15px; margin-top: auto; padding-left: 3px; gap: 8px; }
.bpc { width: 34px; background: #1e1e1e; }
.plane { color: #777; }
.bin { margin-right: -1px; }
.scroll { flex: 1; height: 13px; margin-right: 14px; background: #1c1c1c; }
.scroll i { display: block; width: 158px; height: 13px; border-radius: 7px; background: #343434; }

.viewer { display: flex; flex-direction: column; }
.foot { margin-left: 23px; }
.comptab { margin-left: 48px; gap: 7px; }
.crumbs { display: flex; align-items: center; height: 15px; padding-left: 25px; gap: 12px; }
.crumbs a { color: #8e8e8e; text-decoration: none; }
.crumbs .icon { color: #777; }
.lastch { margin-right: -9px; }
.crumbs .cur { color: #2d7fd0; background: #161616; padding: 1px 21px 1px 8px; }
.canvas { display: grid; grid-template: 13px minmax(0, 1fr) / 13px minmax(0, 1fr); height: 664px; margin-top: 4px; }
.canvas svg { display: block; width: 100%; height: 100%; background: #000; }
.canvas svg.hruler { border-bottom: 1px solid #777; }
.canvas svg.vruler { border-right: 1px solid #777; }
.tk { stroke: #777; shape-rendering: crispEdges; }
.canvas text { font-size: 8px; fill: #999; }
.stage { display: flex; align-items: center; justify-content: center; }
.frame { width: 693px; height: 110px; background: #000; color: #d2cb9c; text-align: center; overflow: hidden; font-family: "Bebas Neue", "Roboto Condensed", "Liberation Sans Narrow", Roboto, sans-serif; font-weight: 300; white-space: nowrap; }
.big { font-size: 60px; line-height: 52px; margin-top: 18px; -webkit-text-stroke: 3px #000; }
.small { font-size: 27px; line-height: 26px; -webkit-text-stroke: 1px #000; }
.vfoot { display: flex; align-items: center; height: 21px; margin-top: auto; padding-left: 4px; border-top: 1px solid #1a1a1a; }
.vfoot select { height: 15px; }
.w60 { width: 60px; } .w74 { width: 74px; }
.bar { width: 1px; height: 12px; background: #181818; margin: 0 5px; }
.vicons { display: flex; gap: 7px; padding: 0 2px; }
.exp { color: #2d7fd0; padding: 0 9px 0 2px; }
.off .icon { color: #3c3c3c; }
.tc { width: 60px; height: 15px; border: 1px solid #1a1a1a; }

.side { display: flex; flex-direction: column; gap: 3px; }
.audio { height: 175px; }
.audio .tabs { padding-left: 11px; height: 30px; }
.audio .tab.active { margin-left: 34px; padding-left: 3px; }
.mix { display: flex; align-items: flex-start; padding-left: 7px; }
.vu { width: 24px; }
.peak { display: block; height: 5px; background: #000; border: 1px solid #3a3a3a; margin-bottom: 1px; }
.lvl { display: block; height: 135px; border: 1px solid #3a3a3a; background: linear-gradient(90deg, transparent 10px, #111 10px 11px, transparent 11px), linear-gradient(#6e201e, #6e641e 18%, #1e6e1e 34%, #1d3a1d 66%, #1d361d); }
.scale { display: flex; flex-direction: column; justify-content: space-between; list-style: none; margin: 6px 0 0; padding: 0; height: 134px; }
.db { width: 25px; padding-left: 5px; }
.db li:first-child { padding-left: 3px; }
.gain { width: 40px; height: 122px; margin-left: 2px; }
.gain li { padding-left: 3px; }
.gain li.neg { padding-left: 0; }
.faders { display: flex; margin: 10px 0 0 15px; gap: 2px; }
.faders label { display: flex; flex-direction: column; align-items: center; width: 18px; color: #555; }
.faders span { margin-top: 8px; }
.faders input { appearance: none; writing-mode: vertical-lr; width: 12px; height: 112px; margin: 0; background: linear-gradient(#444, #444) center / 2px 100% no-repeat; }
.faders input::-webkit-slider-thumb { appearance: none; width: 12px; height: 12px; border: 2px solid #4c4c4c; border-radius: 50%; background: #222; box-shadow: 0 0 0 2px #222; }
.faders .mid input { width: 18px; height: 104px; margin-top: 4px; }
.faders .mid input::-webkit-slider-thumb { width: 18px; height: 18px; }
.preview { height: 50px; }
h2 { display: flex; gap: 12px; align-items: center; margin: 0; padding: 7px 0 0 11px; font: inherit; color: #b8b8b8; }
.transport { display: flex; gap: 11px; padding: 12px 0 0 41px; }
.char { height: 261px; }
.ctabs { padding-top: 5px; height: 31px; }
.ctabs .tab:nth-child(2) { margin-left: 41px; }
.ctabs .tab:nth-child(3) { margin-left: 35px; padding-left: 2px; }
.ctabs .tab:nth-child(4) { margin-left: 19px; }
.ctabs .morebtn { margin: 4px 4px 0 auto; }
.fonts { display: flex; gap: 4px; padding: 1px 0 3px 5px; }
.fsel { display: flex; flex-direction: column; gap: 5px; }
.fsel select { width: 105px; height: 16px; }
.pick { display: flex; flex-direction: column; gap: 6px; width: 18px; align-items: center; }
.bw { width: 18px; height: 15px; border: 1px solid #888; background: linear-gradient(#000 50%, #fff 50%); }
.grp { display: grid; grid-template-columns: 93px 77px; margin-left: 4px; width: 170px; padding: 3px 0; border-top: 1px solid #2e2e2e; }
.cell { display: flex; align-items: center; height: 18px; }
.cell .gl { width: 21px; }
.cell:nth-child(even) .gl { width: 24px; }
.cell .v { width: 40px; white-space: nowrap; }
.cell b { font-weight: 400; color: #2d7fd0; margin-right: 2px; font-size: 10px; }
.cell .dimv { color: #444; }
.gl { display: flex; align-items: flex-end; font: bold 15px/16px "Liberation Serif", serif; color: #aaa; }
.gl.mid { align-items: center; }
.gl small { font-size: 10px; line-height: 14px; }
.gl.sans { display: grid; font: 10px/9px "Liberation Sans", sans-serif; justify-items: start; }
.gl u { text-decoration: none; font: 9px/7px "DejaVu Sans", sans-serif; padding-left: 3px; }
.gl mark { background: #aaa; color: #222; font-weight: bold; padding: 0 1px; }
.gl.stack { font: 9px/8px "Liberation Serif", serif; align-items: center; }
.gl.ul { display: flex; text-decoration: underline; font-size: 13px; line-height: 14px; }
.tw { font: bold 13px/10px "Liberation Serif", serif; padding-left: 2px; }
.jp { font: 9px/10px "Noto Sans CJK JP", sans-serif; padding-left: 2px; }
.grp.one { padding: 4px 0; }
.one select { width: 99px; height: 16px; margin-left: -23px; align-self: center; }
.faux { display: flex; gap: 12px; margin-left: 4px; width: 170px; padding: 7px 0 5px 24px; border-top: 1px solid #2e2e2e; font: 13px/14px "Liberation Serif", serif; color: #bbb; }
.faux b { font-weight: 900; }
.faux small { font-size: 9px; } .faux sup, .faux sub { font-size: 7px; line-height: 0; }
.opts { display: flex; gap: 31px; padding: 6px 0 0 9px; }
.opts label { display: flex; align-items: center; gap: 4px; }
.opts input { appearance: none; margin: 0; width: 12px; height: 12px; border: 2px solid #777; border-radius: 2px; }
.align { flex: 1; border: 1px solid #2263a5; }
.align .tabs { padding-left: 8px; }
.align .tab.active { padding-left: 2px; }
.align .tab.muted { margin-left: 20px; }
.alto { display: flex; align-items: center; gap: 10px; padding-left: 5px; }
.alto select { width: 95px; height: 15px; }
.aicons { display: flex; gap: 14px; padding: 5px 0 4px 7px; }
.dl { padding-left: 5px; border-top: 1px solid #2c2c2c; padding-top: 2px; width: 173px; }
.aicons.off { padding-top: 2px; }

.timeline { margin-top: 3px; height: 316px; }
.ttabs { height: 28px; }
.rq { margin-left: 26px; }
.ttabs .tab + .tab { margin-left: 48px; }
.ttabs .tab + .tab.active { margin-left: 35px; }
.ttabs .sw { margin-right: 10px; }
.ttabs .x { margin-right: 9px; }
.tl { display: grid; grid-template-columns: 502px minmax(0, 1fr) 16px; height: 288px; }
.tleft { padding-left: 2px; }
.thead { display: flex; height: 27px; }
.time { width: 92px; padding-left: 9px; color: #1d5290; }
.time b { display: block; margin-left: 3px; font: 500 13px/12px "Noto Sans CJK SC", sans-serif; color: #2d8ceb; }
.time span { display: block; }
.thead .find { width: 263px; margin: 3px 0 0; height: 16px; }
.ticons { display: flex; gap: 8px; margin: 3px 0 0 14px; }
.ticons .icon:first-child { margin-right: 6px; }
.ticons .icon:last-child { margin-left: 8px; }
.layers tr { height: 15px; background: #2c2c2c; }
.layers thead tr { background: #323232; color: #909090; }
.layers tr.lsel { background: #454545; }
.layers thead .icon { color: #999; }
.k1 { width: 60px; } .k2 { width: 30px; } .k3 { width: 26px; } .k4 { width: 150px; } .k5 { width: 122px; }
.av, .tg, .sws, .par, .ln { display: flex; align-items: center; }
.av { gap: 3px; padding-left: 4px; }
.tg { gap: 4px; padding-left: 8px; }
td .tg { padding-left: 1px; }
.tg .sw { width: 11px; height: 11px; }
.layers th:nth-child(3), .num { padding-left: 2px; }
.layers th:nth-child(4) { padding-left: 2px; }
.num { color: #b4b4b4; }
.sws { gap: 3px; padding-left: 6px; }
.sws .icon, .fxi { width: 10px; }
.fxi { font: italic 10px/12px "Liberation Sans", sans-serif; color: #aaa; }
s { width: 10px; height: 11px; }
.bx { background: #262626; }
.faint { color: #666; }
.ty { width: 14px; font: 500 11px/14px "Liberation Serif", serif; color: #bbb; text-align: center; }
.lname { flex: 1; padding-left: 4px; line-height: 13px; font-weight: 500; color: #c0c0c0; }
.lsel .lname { background: #a0a0a0; color: #222; }
.layers td:last-child { padding-left: 2px; }
.par { gap: 6px; }
.par select { width: 77px; height: 12px; border: 0; }
.tracks { position: relative; padding-left: 7px; display: flex; flex-direction: column; overflow: hidden; }
.navi { display: flex; height: 8px; margin: 1px 6px 0 -6px; }
.cap { width: 5px; background: #2d8ceb; border-radius: 3px; }
.range { flex: 1474; background: #6a6a6a; }
.rest { flex: 205; background: #3a3630; }
.truler { display: block; width: calc(100% - 8px); height: 19px; margin-top: -1px; overflow: visible; }
.truler text { font-size: 9px; fill: #999; }
.area { height: 13px; background: #5f5f5f; }
.green { height: 3px; margin: 1px 0; background: #10c41c; }
.clipbar { height: 13px; margin-bottom: 1px; }
.c1 { background: linear-gradient(#b84a4c, #984346); }
.c2 { background: #7a393b; }
.void { flex: 1; background: #303030; }
.playhead { position: absolute; left: 987px; top: 13px; bottom: 0; width: 14px; background: linear-gradient(90deg, transparent 6px, #2d8ceb 6px 8px, transparent 8px), linear-gradient(90deg, transparent 8px, #4a4a4a 8px) 0 59px no-repeat; }
.work-mark { position: absolute; left: 1167px; top: 31px; }
.tright { padding: 27px 0 0 2px; display: flex; flex-direction: column; gap: 5px; }
.arrows { position: absolute; left: 0; top: 0; width: 100%; height: 100%; pointer-events: none; }
</style>
